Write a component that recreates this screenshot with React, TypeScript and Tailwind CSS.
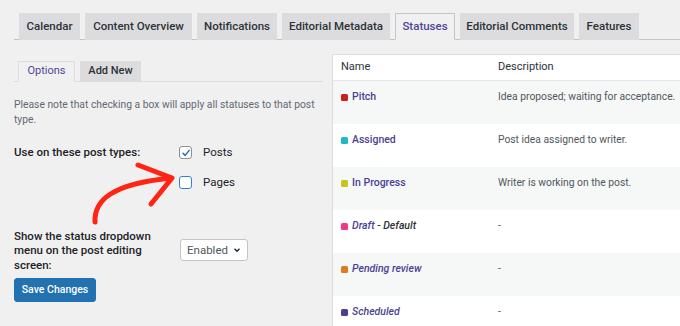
import React from 'react';

const tabs = [
  { label: 'Calendar', w: 'w-[61px]' },
  { label: 'Content Overview', w: 'w-[107px]' },
  { label: 'Notifications', w: 'w-[80px]' },
  { label: 'Editorial Metadata', w: 'w-[108px]' },
  { label: 'Statuses', w: 'w-[60px]', active: true },
  { label: 'Editorial Comments', w: 'w-[114px]' },
  { label: 'Features', w: 'w-[60px]' },
];

const statuses = [
  { name: 'Pitch', desc: 'Idea proposed; waiting for acceptance.', color: 'bg-[#cc1f1a]' },
  { name: 'Assigned', desc: 'Post idea assigned to writer.', color: 'bg-[#1fb8c9]' },
  { name: 'In Progress', desc: 'Writer is working on the post.', color: 'bg-[#c9c41a]' },
  { name: 'Draft', desc: '-', color: 'bg-[#f2387f]', italic: true, suffix: ' - Default' },
  { name: 'Pending review', desc: '-', color: 'bg-[#e07a1f]', italic: true },
  { name: 'Scheduled', desc: '-', color: 'bg-[#4f3d94]', italic: true },
];

const Checkbox: React.FC<{ checked?: boolean; focused?: boolean }> = ({ checked, focused }) => (
  <span
    className={`w-[13px] h-[13px] rounded-[3px] border bg-white flex items-center justify-center ${
      focused ? 'border-[#3582c4]' : 'border-[#8c8f94]'
    }`}
  >
    {checked && (
      <svg width="10" height="10" viewBox="0 0 10 10">
        <path d="M2 5.2 L4.2 7.4 L8.2 2.4" fill="none" stroke="#2271b1" strokeWidth="1.5" strokeLinecap="round" strokeLinejoin="round" />
      </svg>
    )}
  </span>
);

const App: React.FC = () => {
  return (
    <div className="w-[680px] h-[326px] bg-[#f0f0f1] overflow-hidden relative text-[#1d2327]" style={{ fontFamily: 'Roboto, "Noto Sans", sans-serif' }}>
      {/* Top tabs */}
      <div className="pt-[13px]">
        <div className="ml-[14px] pl-[5px] flex gap-[5px] border-b border-[#c3c4c7] h-[27px]">
          {tabs.map((t) => (
            <div
              key={t.label}
              className={`${t.w} h-[27px] flex items-center justify-center text-[11.5px] font-medium border ${
                t.active
                  ? 'bg-[#f0f0f1] border-[#c3c4c7] border-b-[#f0f0f1] text-[#50449a]'
                  : 'bg-[#dcdcde] border-[#dcdcde] text-[#2c3338]'
              }`}
            >
              {t.label}
            </div>
          ))}
        </div>
      </div>

      <div className="flex mt-[14px] gap-[9px]">
        {/* Left column */}
        <div className="w-[309px] ml-[14px] pt-[7px] shrink-0">
          <div className="flex gap-[5px] pl-[4px] border-b border-[#dcdcde] h-[21px]">
            <div className="w-[57px] h-[21px] flex items-center justify-center text-[11px] text-[#50449a] border border-[#dcdcde] border-b-[#f0f0f1] bg-[#f0f0f1]">
              Options
            </div>
            <div className="w-[61px] h-[21px] flex items-center justify-center text-[11px] font-medium text-[#2c3338] bg-[#dcdcde] border border-[#dcdcde]">
              Add New
            </div>
          </div>

          <p className="mt-[15px] text-[10.3px] leading-[15px] text-[#646970]">
            Please note that checking a box will apply all statuses to that post type.
          </p>

          <div className="mt-[17px] flex">
            <div className="w-[165px] shrink-0 text-[11.5px] font-medium leading-[14px] pt-[1px]">Use on these post types:</div>
            <div className="flex flex-col gap-[13px]">
              <label className="flex items-center gap-[11px] text-[11.5px]">
                <Checkbox checked />
                Posts
              </label>
              <label className="flex items-center gap-[11px] text-[11.5px]">
                <Checkbox focused />
                Pages
              </label>
            </div>
          </div>

          <div className="mt-[37px] flex items-center">
            <div className="w-[166px] shrink-0 text-[11.5px] font-medium leading-[14.5px]">
              Show the status dropdown menu on the post editing screen:
            </div>
            <div className="w-[68px] h-[22px] bg-white border border-[#c3c4c7] rounded-[3px] flex items-center justify-between pl-[6px] pr-[5px] text-[11.5px] text-[#50575e]">
              Enabled
              <svg width="10" height="10" viewBox="0 0 10 10">
                <path d="M2.5 3.8 L5 6.3 L7.5 3.8" fill="none" stroke="#1d2327" strokeWidth="1.3" />
              </svg>
            </div>
          </div>

          <button className="mt-[6px] w-[82px] h-[24px] rounded-[3px] bg-[#2271b1] border border-[#2271b1] text-white text-[10.5px] font-medium">
            Save Changes
          </button>
        </div>

        {/* Right table */}
        <div className="flex-1 bg-white border-l border-t border-[#dcdcde] h-[300px]">
          <div className="flex h-[26px] items-center border-b border-[#e2e4e7] text-[11px] text-[#2c3338]">
            <div className="w-[165px] shrink-0 pl-[8px]">Name</div>
            <div>Description</div>
          </div>
          {statuses.map((s, i) => (
            <div key={s.name} className={`flex h-[43px] pt-[9px] text-[10.5px] leading-[14px] ${i % 2 === 0 ? 'bg-[#f6f7f7]' : 'bg-white'}`}>
              <div className="w-[165px] shrink-0 pl-[8px] flex items-start gap-[4px]">
                <span className={`mt-[3.5px] w-[7px] h-[7px] rounded-[1.5px] ${s.color}`} />
                <span className={`font-medium text-[#4b3f94] ${s.italic ? 'italic' : ''}`}>
                  {s.name}
                  {s.suffix && <span className="text-[#2c3338]">{s.suffix}</span>}
                </span>
              </div>
              <div className="text-[10.3px] text-[#50575e] whitespace-nowrap">{s.desc}</div>
            </div>
          ))}
        </div>
      </div>

      {/* Red annotation arrow */}
      <svg className="absolute left-0 top-0 pointer-events-none" width="680" height="326" viewBox="0 0 680 326">
        <path d="M95 222 C 94 200 112 184 171 178" fill="none" stroke="#ff2414" strokeWidth="5" strokeLinecap="round" />
        <path d="M138 165 L172 178 L151 204" fill="none" stroke="#ff2414" strokeWidth="5" strokeLinecap="round" strokeLinejoin="round" />
      </svg>
    </div>
  );
};

export default App;
